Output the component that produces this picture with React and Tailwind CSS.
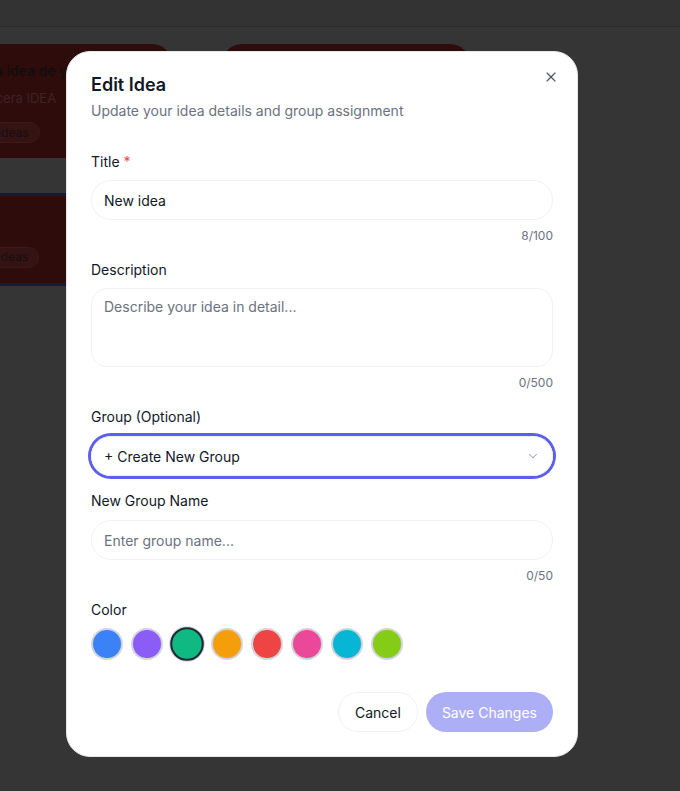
import React, { useState } from 'react';
import { X, ChevronDown } from 'lucide-react';

const colors = [
  { name: 'blue', cls: 'bg-[#3b82f6]' },
  { name: 'violet', cls: 'bg-[#8b5cf6]' },
  { name: 'emerald', cls: 'bg-[#10b981]' },
  { name: 'amber', cls: 'bg-[#f59e0b]' },
  { name: 'red', cls: 'bg-[#ef4444]' },
  { name: 'pink', cls: 'bg-[#ec4899]' },
  { name: 'cyan', cls: 'bg-[#06b6d4]' },
  { name: 'lime', cls: 'bg-[#84cc16]' },
];

const App = () => {
  const [title, setTitle] = useState('New idea');
  const [description, setDescription] = useState('');
  const [groupName, setGroupName] = useState('');
  const [selectedColor, setSelectedColor] = useState('emerald');

  return (
    <div className="relative min-h-screen overflow-hidden bg-[#353535] font-['Inter','Liberation_Sans',sans-serif]">
      {/* Dimmed page behind the dialog */}
      <div className="h-[27px] border-b border-[#2b2b2b] bg-[#333333]" />
      <div className="ml-[-44px] pt-[17px]">
        <div className="flex gap-[50px]">
          <div className="h-[114px] w-[216px] rounded-[20px] bg-[#2e0c0c] px-[20px] pt-[17px]">
            <p className="text-[14px] font-semibold leading-5 text-[#120e0e] whitespace-nowrap">Una idea de yo</p>
            <p className="mt-[7px] text-[13px] leading-5 text-[#3e2424] whitespace-nowrap">Tercera IDEA</p>
            <span className="mt-[14px] inline-flex h-[21px] items-center rounded-full border border-[#3c1a1a] bg-[#361313] px-2.5 text-[12px] font-medium text-[#161010]">0 ideas</span>
          </div>
          <div className="h-[114px] w-[248px] rounded-[20px] bg-[#2e0c0c]" />
        </div>
        <div className="mt-[35px] h-[93px] w-[216px] border-y-[3px] border-[#0f1c3a] bg-[#2e0c0c] px-[20px] pt-[47px]">
          <span className="inline-flex h-[21px] items-center rounded-full border border-[#3c1a1a] bg-[#361313] px-2.5 text-[12px] font-medium text-[#161010]">2 ideas</span>
        </div>
      </div>

      {/* Dialog */}
      <div className="fixed inset-0 flex items-start pl-[66px] pt-[51px]">
        <div className="relative w-[512px] rounded-[24px] border border-[#e5e7eb] bg-white px-6 pb-6 pt-[19px]">
          <button className="absolute right-[18px] top-[17px] text-[#4b5563]">
            <X size={16} strokeWidth={1.75} />
          </button>

          <h2 className="text-[18px] font-semibold leading-7 text-[#111827]">Edit Idea</h2>
          <p className="mt-0.5 text-[14px] leading-5 text-[#6b7280]">Update your idea details and group assignment</p>

          <div className="mt-[31px]">
            <label className="block text-[14px] font-normal leading-5 text-[#111827]">
              Title <span className="text-[#ef4444]">*</span>
            </label>
            <input
              type="text"
              value={title}
              onChange={(e) => setTitle(e.target.value)}
              className="mt-2 h-10 w-full rounded-full border border-[#f0f1f3] px-3 text-[14px] text-[#111827] outline-none"
            />
            <p className="mt-2 text-right text-[12px] leading-4 text-[#6b7280]">{title.length}/100</p>

            <label className="mt-4 block text-[14px] font-normal leading-5 text-[#111827]">Description</label>
            <textarea
              value={description}
              onChange={(e) => setDescription(e.target.value)}
              placeholder="Describe your idea in detail..."
              className="mt-2 block h-[79px] w-full resize-none rounded-2xl border border-[#f0f1f3] px-3 py-2 text-[14px] leading-5 text-[#111827] outline-none placeholder:text-[#6b7280]"
            />
            <p className="mt-2 text-right text-[12px] leading-4 text-[#6b7280]">{description.length}/500</p>

            <label className="mt-4 block text-[14px] font-normal leading-5 text-[#111827]">Group (Optional)</label>
            <div className="mt-[9px] flex h-10 items-center justify-between rounded-full border border-[#f0f1f3] px-3 ring-[3px] ring-[#5b5fe9]">
              <span className="text-[14px] text-[#111827]">+ Create New Group</span>
              <ChevronDown size={14} strokeWidth={1.75} className="text-[#9ca3af]" />
            </div>

            <label className="mt-[15px] block text-[14px] font-normal leading-5 text-[#111827]">New Group Name</label>
            <input
              type="text"
              value={groupName}
              onChange={(e) => setGroupName(e.target.value)}
              placeholder="Enter group name..."
              className="mt-[9px] h-10 w-full rounded-full border border-[#f0f1f3] px-3 text-[14px] text-[#111827] outline-none placeholder:text-[#6b7280]"
            />
            <p className="mt-2 text-right text-[12px] leading-4 text-[#6b7280]">{groupName.length}/50</p>

            <label className="mt-4 block text-[14px] font-normal leading-5 text-[#111827]">Color</label>
            <div className="mt-2 flex gap-2">
              {colors.map((c) => (
                <button
                  key={c.name}
                  onClick={() => setSelectedColor(c.name)}
                  className={
                    selectedColor === c.name
                      ? `h-8 w-8 scale-105 rounded-full border-2 border-[#1f2937] ring-1 ring-[#d1d5db] ${c.cls}`
                      : `h-8 w-8 rounded-full border-2 border-[#d1d5db] ${c.cls}`
                  }
                />
              ))}
            </div>
          </div>

          <div className="mt-8 flex justify-end gap-2">
            <button className="h-10 rounded-full border border-[#f0f1f3] bg-white px-4 text-[14px] font-normal text-[#111827]">
              Cancel
            </button>
            <button className="h-10 rounded-full bg-[#adaff6] px-4 text-[14px] font-normal text-white">
              Save Changes
            </button>
          </div>
        </div>
      </div>
    </div>
  );
};

export default App;
